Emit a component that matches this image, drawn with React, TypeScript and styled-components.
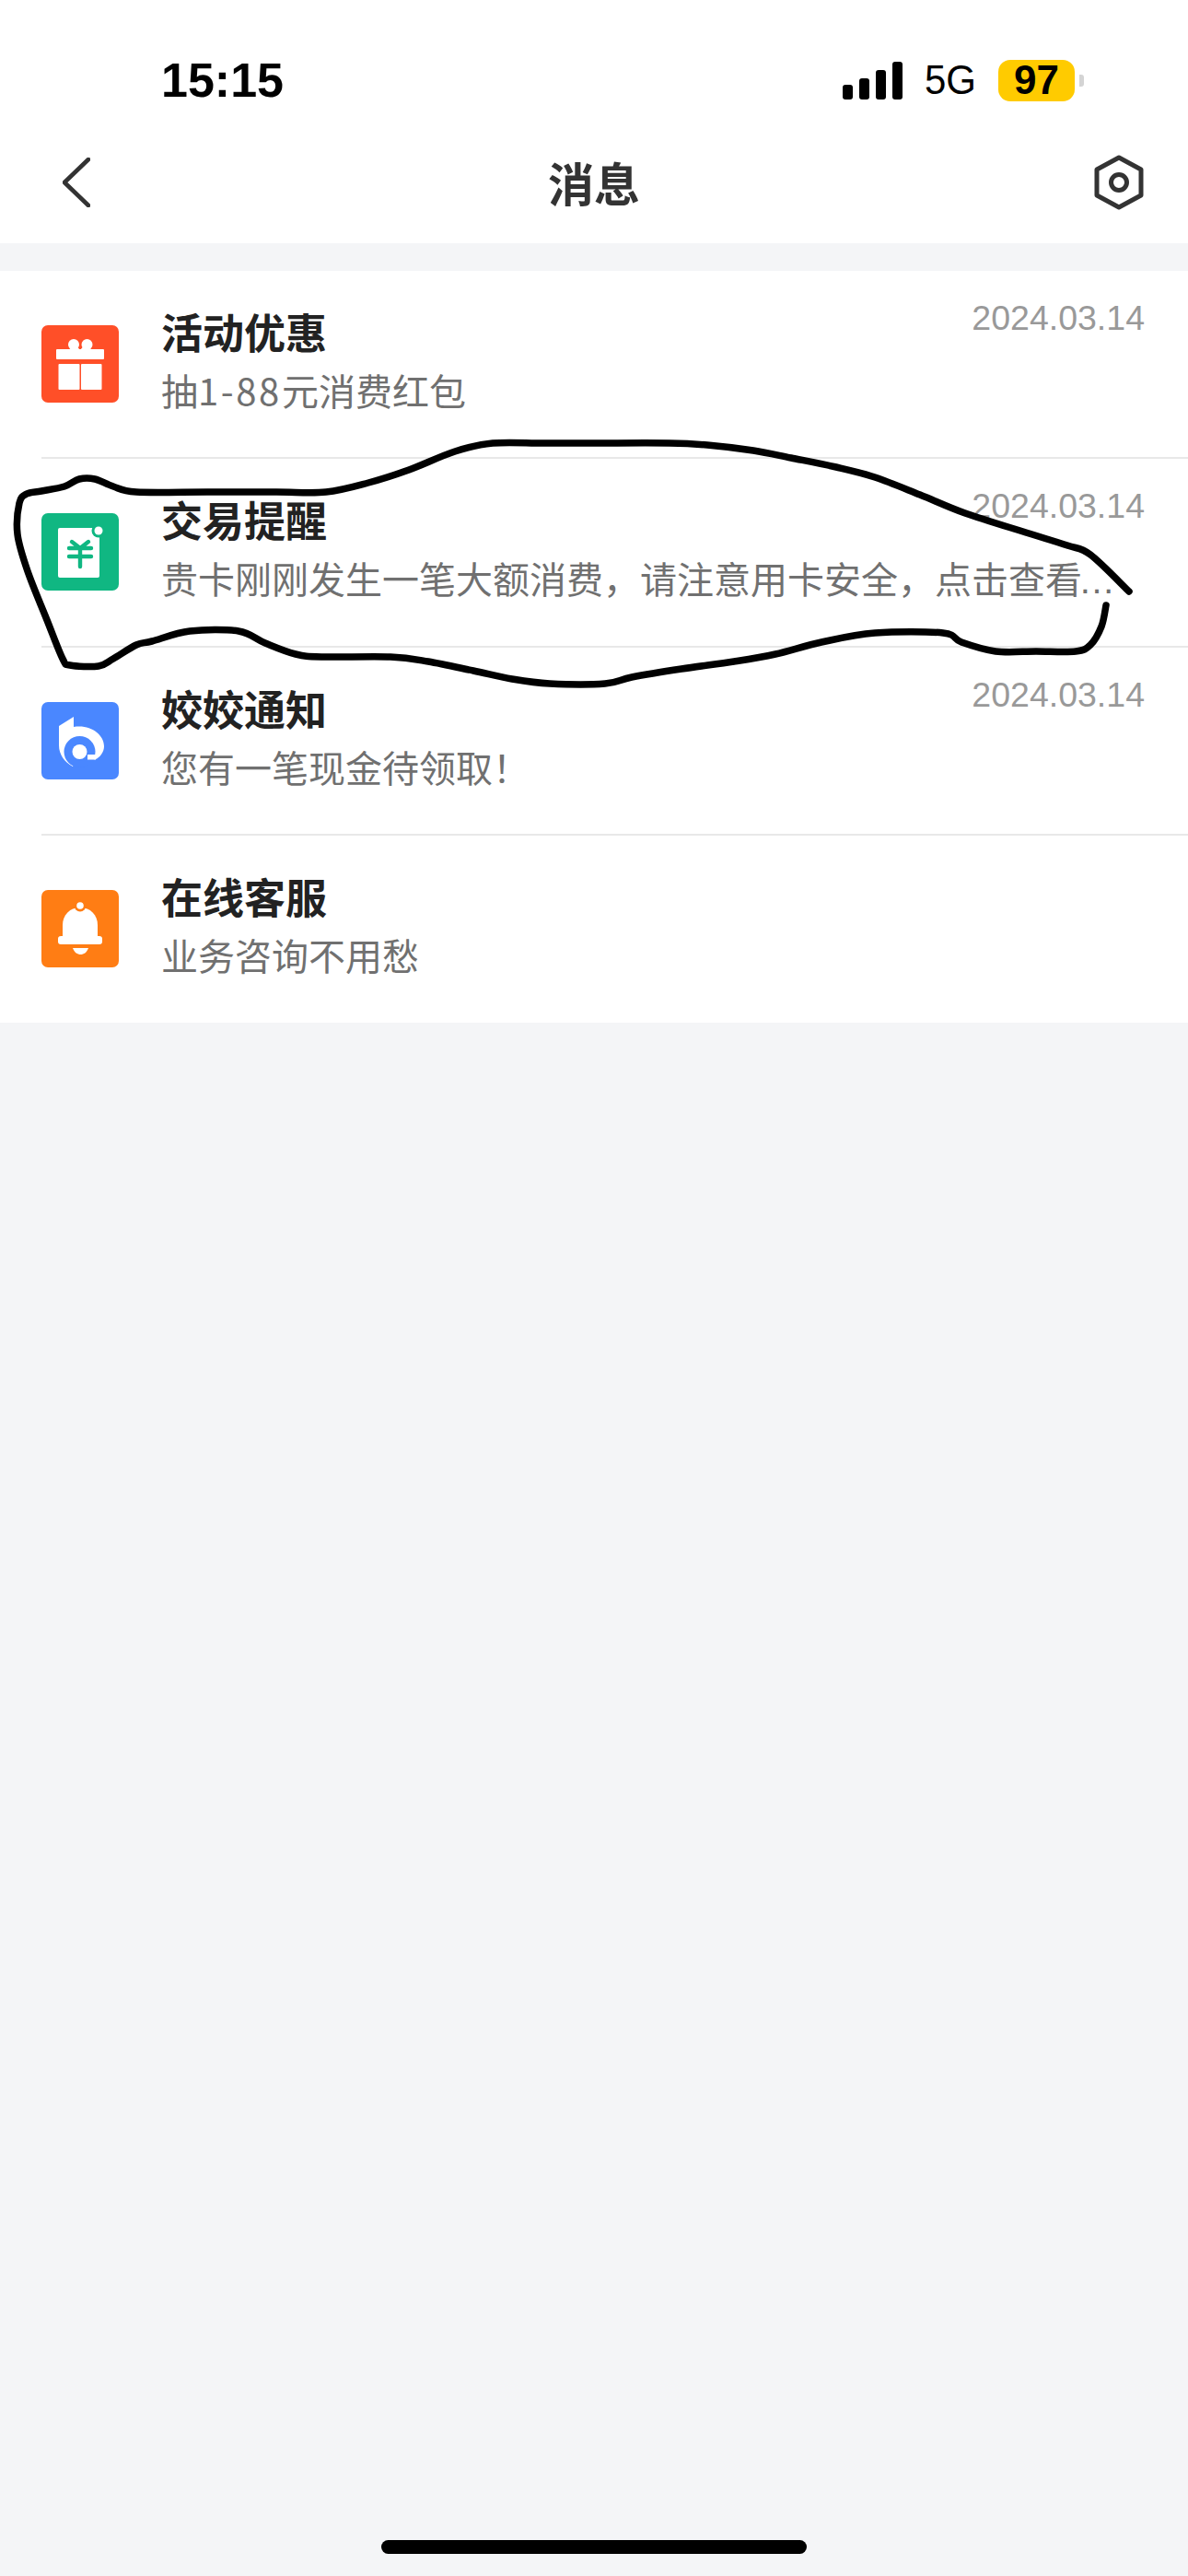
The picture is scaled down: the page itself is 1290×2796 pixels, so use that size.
import React from "react";
import styled, { createGlobalStyle } from "styled-components";

const CJK = `"Noto Sans CJK SC", "Noto Sans", sans-serif`;

const GlobalStyle = createGlobalStyle`
  html, body {
    margin: 0;
    padding: 0;
    background: #f4f5f7;
  }
  * {
    box-sizing: border-box;
  }
`;

const Page = styled.div`
  position: relative;
  width: 1290px;
  height: 2796px;
  display: flex;
  flex-direction: column;
  overflow: hidden;
  background: #f4f5f7;
  font-family: ${CJK};
`;

const Header = styled.header`
  background: #fff;
`;

const StatusBar = styled.div`
  height: 132px;
  padding: 42px 113px 0 175px;
  display: flex;
  align-items: center;
  justify-content: space-between;
  color: #000;
  font-family: "Liberation Sans", Arial, sans-serif;
`;

const Clock = styled.span`
  font-size: 52px;
  font-weight: 700;
`;

const StatusRight = styled.div`
  display: flex;
  align-items: center;
`;

const Signal = styled.div`
  display: flex;
  align-items: flex-end;
  gap: 7px;
  height: 41px;
`;

const SignalBar = styled.span<{ $h: number }>`
  width: 11px;
  height: ${(p) => p.$h}px;
  border-radius: 3px;
  background: #000;
`;

const Network = styled.span`
  margin-left: 24px;
  font-size: 42px;
  line-height: 44px;
  transform: scaleY(1.05);
`;

const Battery = styled.span`
  margin-left: 24px;
  width: 83px;
  height: 45px;
  border-radius: 13px;
  background: #ffcb00;
  display: flex;
  align-items: center;
  justify-content: center;
  font-size: 44px;
  font-weight: 700;
`;

const BatteryCap = styled.span`
  margin-left: 5px;
  width: 5px;
  height: 13px;
  border-radius: 0 3px 3px 0;
  background: #d4d4d4;
`;

const NavBar = styled.nav`
  height: 132px;
  padding: 0 48px;
  display: grid;
  grid-template-columns: 1fr auto 1fr;
  align-items: center;
`;

const NavTitle = styled.h1`
  margin: -3px 0 0;
  font-size: 50px;
  font-weight: 700;
  line-height: 60px;
  color: #333;
`;

const NavRight = styled.div`
  justify-self: end;
  display: flex;
`;

const NavLeft = styled.div`
  padding-left: 20px;
  display: flex;
`;

const List = styled.ul`
  list-style: none;
  margin: 30px 0 0;
  padding: 0;
  background: #fff;
`;

const Item = styled.li<{ $first: boolean }>`
  height: ${(p) => (p.$first ? 202 : 204.5)}px;
  margin-left: 45px;
  border-top: ${(p) => (p.$first ? "0" : "2px solid #e8e8e8")};
  display: flex;
  align-items: center;
  gap: 46px;
`;

const Content = styled.div<{ $first: boolean }>`
  flex: 1;
  min-width: 0;
  height: 100%;
  padding: ${(p) => (p.$first ? 34 : 34)}px 47px 0 0;
`;

const TitleRow = styled.div`
  display: flex;
  justify-content: space-between;
  align-items: flex-start;
  height: 64px;
`;

const Title = styled.span`
  font-size: 45px;
  font-weight: 700;
  line-height: 64px;
  color: #222;
`;

const DateText = styled.span`
  margin-top: -5px;
  font-family: "Liberation Sans", Arial, sans-serif;
  font-size: 37.5px;
  line-height: 44px;
  color: #999;
`;

const Sub = styled.div`
  margin-top: 4px;
  font-size: 40px;
  line-height: 54px;
  color: #707070;
  white-space: nowrap;
`;

const Num = styled.span`
  letter-spacing: 2.6px;
`;

const Dots = styled.span`
  margin-left: -4px;
  font-family: "Liberation Sans", Arial, sans-serif;
`;

const IconBox = styled.div<{ $bg: string }>`
  flex: none;
  width: 84px;
  height: 84px;
  border-radius: 7px;
  background: ${(p) => p.$bg};
`;

const IconSvg = styled.svg`
  display: block;
  width: 84px;
  height: 84px;
`;

const HomeBar = styled.div`
  margin: auto auto 24px;
  width: 462px;
  height: 15px;
  border-radius: 8px;
  background: #000;
`;

const Ink = styled.svg`
  position: absolute;
  left: 0;
  top: 0;
  pointer-events: none;
`;

const GiftIcon = () => (
  <IconSvg viewBox="0 0 84 84">
    <circle cx="35" cy="21" r="6" fill="#fff" />
    <circle cx="49.5" cy="21" r="6" fill="#fff" />
    <path d="M36 20 42 27 48 20V28H36Z" fill="#fff" />
    <rect x="16" y="26" width="52" height="11" rx="1" fill="#fff" />
    <rect x="18.5" y="42" width="23" height="28" rx="1" fill="#fff" />
    <rect x="43" y="42" width="22.5" height="28" rx="1" fill="#fff" />
  </IconSvg>
);

const TradeIcon = () => (
  <IconSvg viewBox="0 0 84 84">
    <rect x="18" y="16" width="45" height="54" rx="2" fill="#fff" />
    <circle cx="62" cy="19" r="7.5" fill="#10b782" />
    <circle cx="62" cy="19" r="4.5" fill="#fff" />
    <path
      d="M33 31 42 38 51 31M30 38H54M30 47H54M42 38V58"
      fill="none"
      stroke="#10b782"
      strokeWidth="4.4"
      strokeLinecap="round"
      strokeLinejoin="round"
    />
  </IconSvg>
);

const LogoIcon = () => (
  <IconSvg viewBox="0 0 84 84">
    <path
      d="M19 26 35 16V27C53 24 68 35 68 48C68 54 64 60 58 62.5L42 54 34 70C25 65 19 57 19 47Z"
      fill="#fff"
    />
    <circle cx="41.5" cy="54" r="17" fill="#4a87ff" />
    <circle cx="41.5" cy="54" r="8" fill="#fff" />
    <rect x="50" y="57" width="9" height="5.5" fill="#fff" />
  </IconSvg>
);

const BellIcon = () => (
  <IconSvg viewBox="0 0 84 84">
    <path d="M23 50V38C23 27 31 19 42 19C53 19 61 27 61 38V50Z" fill="#fff" />
    <circle cx="42" cy="17" r="6.5" fill="#ff7d14" />
    <circle cx="42" cy="17" r="3.8" fill="#fff" />
    <rect x="18" y="50" width="48" height="9" rx="3" fill="#fff" />
    <path d="M34 63H51C49 68 46 70 42.5 70C39 70 36 68 34 63Z" fill="#fff" />
  </IconSvg>
);

// hand drawn circle around the second row, traced from the screenshot
const inkPoints: [number, number][] = [
  [1226, 642], [1184, 602], [1159, 592], [1114, 578], [1048, 557], [999, 537],
  [950, 518], [908, 507], [859, 497], [818, 489], [768, 483], [727, 481],
  [645, 481], [590, 481], [535, 481], [494, 490], [444, 510], [400, 524],
  [354, 534], [300, 534], [225, 534], [148, 534], [123, 528], [103, 520],
  [86, 520], [70, 528], [45, 533], [29, 536], [21, 546], [19, 580],
  [30, 620], [51, 673], [68, 715], [76, 722], [107, 723], [123, 715],
  [148, 700], [165, 696], [206, 685], [259, 685], [288, 698], [321, 710],
  [350, 713], [424, 713], [465, 718], [514, 728], [556, 737], [597, 742],
  [657, 742], [686, 735], [740, 726], [797, 718], [842, 710], [892, 697],
  [950, 687], [1024, 687], [1044, 697], [1081, 707], [1125, 707], [1168, 707],
  [1184, 700], [1196, 680], [1201, 657],
];

const smoothPath = (pts: [number, number][]) => {
  let d = `M${pts[0][0]} ${pts[0][1]}`;
  for (let i = 0; i < pts.length - 1; i++) {
    const p0 = pts[Math.max(i - 1, 0)];
    const p1 = pts[i];
    const p2 = pts[i + 1];
    const p3 = pts[Math.min(i + 2, pts.length - 1)];
    const c1x = p1[0] + (p2[0] - p0[0]) / 6;
    const c1y = p1[1] + (p2[1] - p0[1]) / 6;
    const c2x = p2[0] - (p3[0] - p1[0]) / 6;
    const c2y = p2[1] - (p3[1] - p1[1]) / 6;
    d += `C${c1x} ${c1y} ${c2x} ${c2y} ${p2[0]} ${p2[1]}`;
  }
  return d;
};

const rows = [
  {
    title: "活动优惠",
    sub: (
      <>
        抽<Num>1-88</Num>元消费红包
      </>
    ),
    date: "2024.03.14",
    bg: "#ff4f28",
    icon: <GiftIcon />,
  },
  {
    title: "交易提醒",
    sub: (
      <>
        贵卡刚刚发生一笔大额消费，请注意用卡安全，点击查看<Dots>…</Dots>
      </>
    ),
    date: "2024.03.14",
    bg: "#10b782",
    icon: <TradeIcon />,
  },
  {
    title: "姣姣通知",
    sub: "您有一笔现金待领取！",
    date: "2024.03.14",
    bg: "#4a87ff",
    icon: <LogoIcon />,
  },
  { title: "在线客服", sub: "业务咨询不用愁", bg: "#ff7d14", icon: <BellIcon /> },
];

export default function App() {
  return (
    <>
      <GlobalStyle />
      <Page>
        <Header>
          <StatusBar>
            <Clock>15:15</Clock>
            <StatusRight>
              <Signal>
                <SignalBar $h={16} />
                <SignalBar $h={23} />
                <SignalBar $h={32} />
                <SignalBar $h={41} />
              </Signal>
              <Network>5G</Network>
              <Battery>97</Battery>
              <BatteryCap />
            </StatusRight>
          </StatusBar>
          <NavBar>
            <NavLeft>
              <svg width="30" height="54" viewBox="0 0 30 54">
                <path d="M28 2 2 27 28 52" fill="none" stroke="#333" strokeWidth="4.6" strokeLinecap="round" strokeLinejoin="round" />
              </svg>
            </NavLeft>
            <NavTitle>消息</NavTitle>
            <NavRight>
              <svg width="54" height="60" viewBox="0 0 54 60">
                <path d="M27 3 51 16V44L27 57 3 44V16Z" fill="none" stroke="#333" strokeWidth="5" strokeLinejoin="round" />
                <circle cx="27" cy="30" r="8.5" fill="none" stroke="#333" strokeWidth="5" />
              </svg>
            </NavRight>
          </NavBar>
        </Header>
        <List>
          {rows.map((row, i) => (
            <Item key={row.title} $first={i === 0}>
              <IconBox $bg={row.bg}>{row.icon}</IconBox>
              <Content $first={i === 0}>
                <TitleRow>
                  <Title>{row.title}</Title>
                  {row.date && <DateText>{row.date}</DateText>}
                </TitleRow>
                <Sub>{row.sub}</Sub>
              </Content>
            </Item>
          ))}
        </List>
        <HomeBar />
        <Ink width="1290" height="800" viewBox="0 0 1290 800">
          <path d={smoothPath(inkPoints)} fill="none" stroke="#000" strokeWidth="7.5" strokeLinecap="round" strokeLinejoin="round" />
        </Ink>
      </Page>
    </>
  );
}
